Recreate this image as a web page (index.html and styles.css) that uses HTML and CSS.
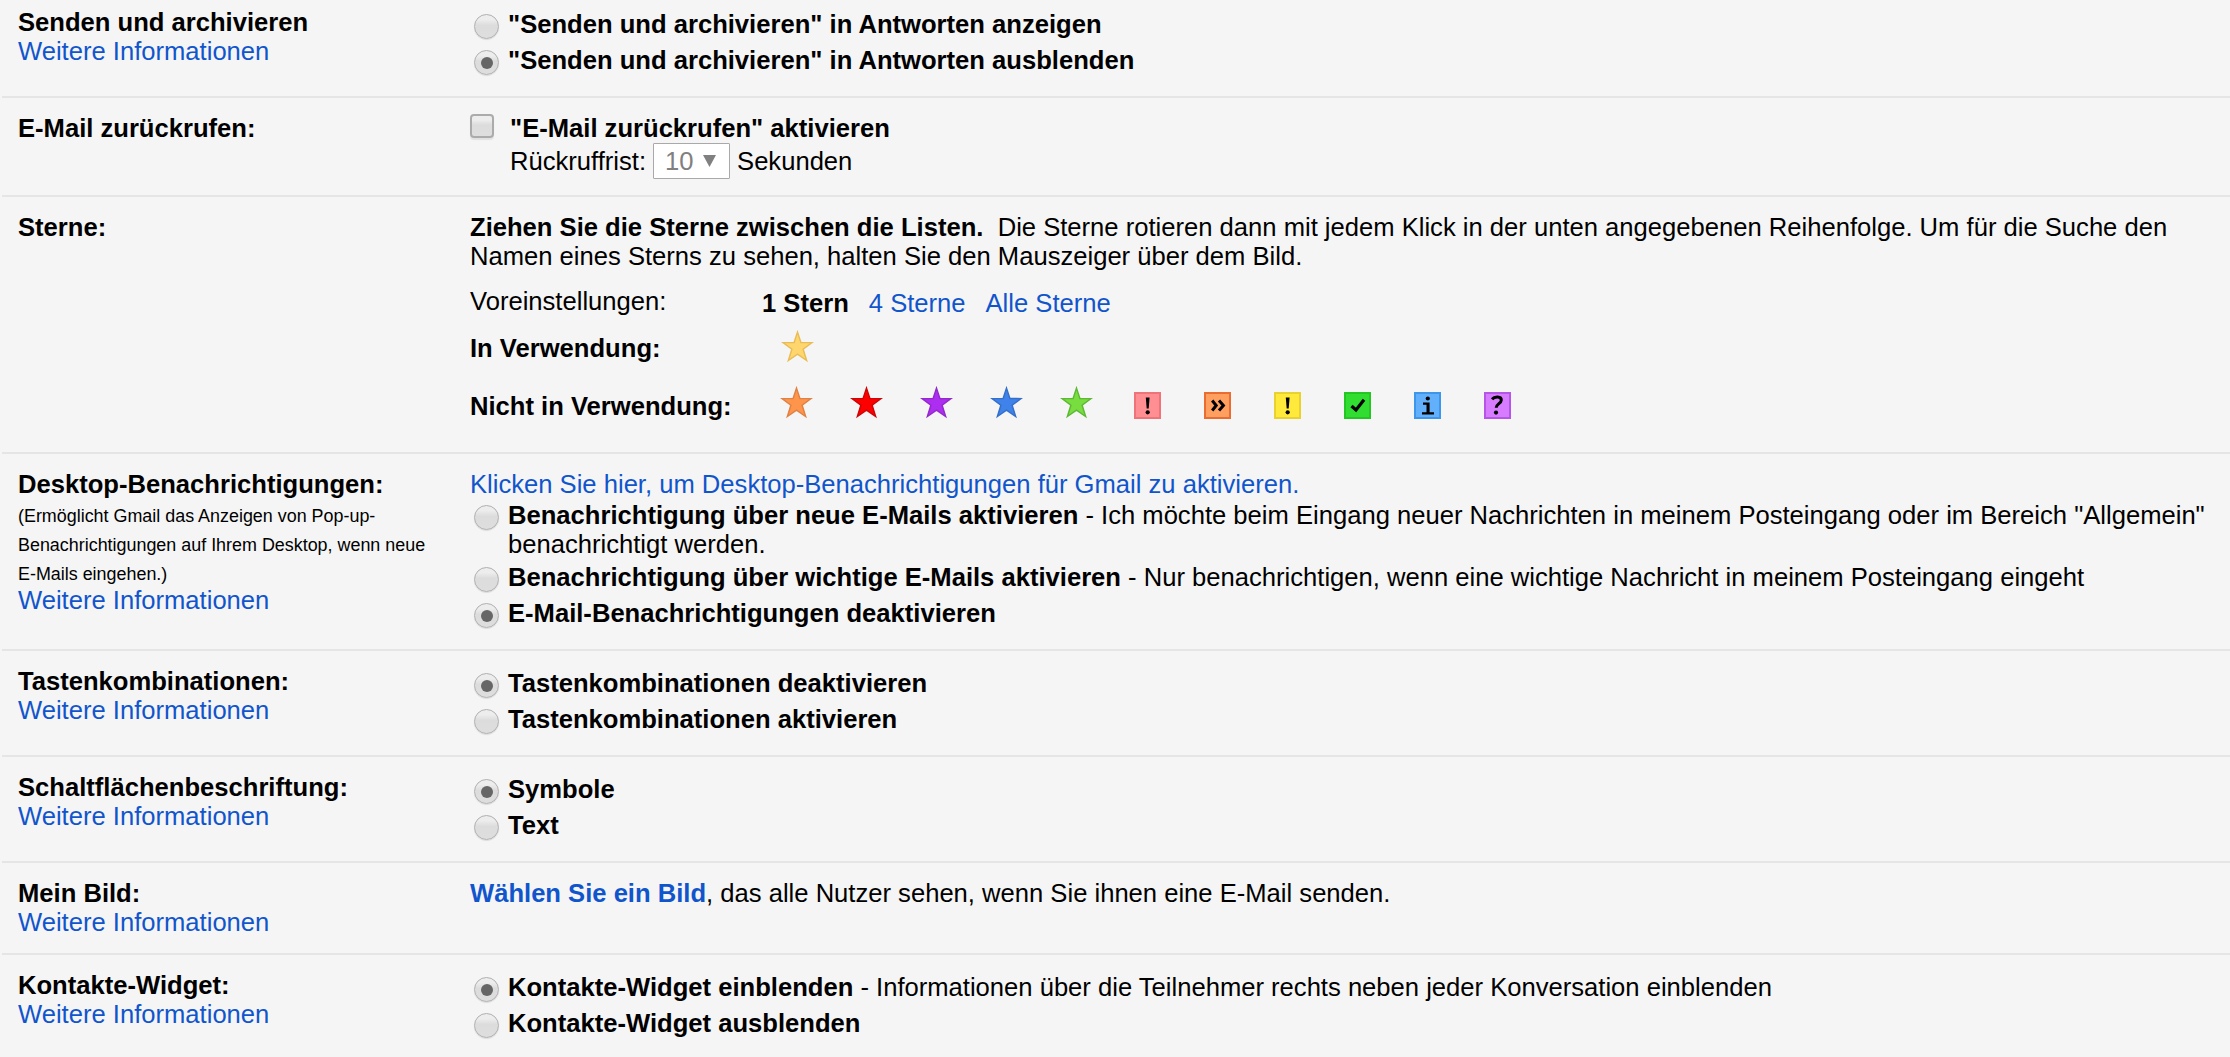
FILE: index.html
```html
<!DOCTYPE html>
<html lang="de">
<head>
<meta charset="utf-8">
<title>Einstellungen</title>
<link rel="stylesheet" href="styles.css">
</head>
<body>
<svg class="defs" width="0" height="0" aria-hidden="true">
  <symbol id="star" viewBox="0 0 34 34">
    <path d="M17 2.200L20.500 12.900L32 13L22.800 19.800L26.400 31.400L17 24.800L7.600 31.400L11.200 19.800L2 13L13.500 12.900Z" stroke-width="1.500" stroke-linejoin="miter"/>
  </symbol>
</svg>
<main class="settings">
  <section class="row">
    <div class="label"><b>Senden und archivieren</b><a>Weitere Informationen</a></div>
    <div class="content">
      <label class="option"><input type="radio" name="archive"><span><b>"Senden und archivieren" in Antworten anzeigen</b></span></label>
      <label class="option"><input type="radio" name="archive" checked><span><b>"Senden und archivieren" in Antworten ausblenden</b></span></label>
    </div>
  </section>

  <section class="row">
    <div class="label"><b>E-Mail zurückrufen:</b></div>
    <div class="content undo">
      <input type="checkbox">
      <div>
        <b class="line">"E-Mail zurückrufen" aktivieren</b>
        <div class="period"><span>Rückruffrist:</span><span class="select">10<svg width="13" height="12" viewBox="0 0 13 12"><path d="M0 0H13L6.500 12Z" fill="#808080"/></svg></span><span>Sekunden</span></div>
      </div>
    </div>
  </section>

  <section class="row stars">
    <div class="label"><b>Sterne:</b></div>
    <div class="content">
      <p><b>Ziehen Sie die Sterne zwischen die Listen.</b>&nbsp; Die Sterne rotieren dann mit jedem Klick in der unten angegebenen Reihenfolge. Um für die Suche den Namen eines Sterns zu sehen, halten Sie den Mauszeiger über dem Bild.</p>
      <div class="star-row presets"><span class="star-label">Voreinstellungen:</span><div class="preset-list"><b>1 Stern</b><a>4 Sterne</a><a>Alle Sterne</a></div></div>
      <div class="star-row used"><b class="star-label">In Verwendung:</b><div class="icons"><svg class="star yellow"><use href="#star"/></svg></div></div>
      <div class="star-row unused"><b class="star-label">Nicht in Verwendung:</b>
        <div class="icons">
          <svg class="star orange"><use href="#star"/></svg>
          <svg class="star red"><use href="#star"/></svg>
          <svg class="star purple"><use href="#star"/></svg>
          <svg class="star blue"><use href="#star"/></svg>
          <svg class="star green"><use href="#star"/></svg>
          <svg class="badge" viewBox="0 0 27 27"><rect x="1" y="1" width="25" height="25" fill="#ff8f92" stroke="#ee7479" stroke-width="2"/><path d="M11.800 5.500H15.600L14.700 16.500H12.700Z"/><circle cx="13.700" cy="20.300" r="2.100"/></svg>
          <svg class="badge" viewBox="0 0 27 27"><rect x="1" y="1" width="25" height="25" fill="#ffa061" stroke="#eb6c30" stroke-width="2"/><path class="stroke" d="M8.200 8.500L12.200 13.500L8.200 18.500M15 8.500L19.400 13.500L15 18.500" stroke-width="3"/></svg>
          <svg class="badge" viewBox="0 0 27 27"><rect x="1" y="1" width="25" height="25" fill="#ffe93b" stroke="#e8d22f" stroke-width="2"/><path d="M11.800 5.500H15.600L14.700 16.500H12.700Z"/><circle cx="13.700" cy="20.300" r="2.100"/></svg>
          <svg class="badge" viewBox="0 0 27 27"><rect x="1" y="1" width="25" height="25" fill="#30dd30" stroke="#23c623" stroke-width="2"/><path class="stroke" d="M7.500 14L12 18L20 7.800" stroke-width="3.200"/></svg>
          <svg class="badge" viewBox="0 0 27 27"><rect x="1" y="1" width="25" height="25" fill="#62b0fb" stroke="#3d96ea" stroke-width="2"/><circle cx="13.800" cy="6.500" r="2.100"/><path d="M9 10.500H15.600V20.200H20V22.600H8V20.200H12.500V12.800H9Z"/></svg>
          <svg class="badge" viewBox="0 0 27 27"><rect x="1" y="1" width="25" height="25" fill="#d77bff" stroke="#b556e8" stroke-width="2"/><path class="stroke" d="M8 7.200C10.500 4.300 17.500 4 17.300 8.300C17.100 11.600 12.300 11.900 12.200 15.800" stroke-width="3"/><circle cx="12" cy="20.600" r="2.100"/></svg>
        </div>
      </div>
    </div>
  </section>

  <section class="row">
    <div class="label"><b>Desktop-Benachrichtigungen:</b><small>(Ermöglicht Gmail das Anzeigen von Pop-up-<br>Benachrichtigungen auf Ihrem Desktop, wenn neue<br>E-Mails eingehen.)</small><a>Weitere Informationen</a></div>
    <div class="content">
      <a class="line">Klicken Sie hier, um Desktop-Benachrichtigungen für Gmail zu aktivieren.</a>
      <label class="option"><input type="radio" name="notify"><span><b>Benachrichtigung über neue E-Mails aktivieren</b> - Ich möchte beim Eingang neuer Nachrichten in meinem Posteingang oder im Bereich "Allgemein" benachrichtigt werden.</span></label>
      <label class="option"><input type="radio" name="notify"><span><b>Benachrichtigung über wichtige E-Mails aktivieren</b> - Nur benachrichtigen, wenn eine wichtige Nachricht in meinem Posteingang eingeht</span></label>
      <label class="option"><input type="radio" name="notify" checked><span><b>E-Mail-Benachrichtigungen deaktivieren</b></span></label>
    </div>
  </section>

  <section class="row">
    <div class="label"><b>Tastenkombinationen:</b><a>Weitere Informationen</a></div>
    <div class="content">
      <label class="option"><input type="radio" name="keys" checked><span><b>Tastenkombinationen deaktivieren</b></span></label>
      <label class="option"><input type="radio" name="keys"><span><b>Tastenkombinationen aktivieren</b></span></label>
    </div>
  </section>

  <section class="row">
    <div class="label"><b>Schaltflächenbeschriftung:</b><a>Weitere Informationen</a></div>
    <div class="content">
      <label class="option"><input type="radio" name="buttons" checked><span><b>Symbole</b></span></label>
      <label class="option"><input type="radio" name="buttons"><span><b>Text</b></span></label>
    </div>
  </section>

  <section class="row">
    <div class="label"><b>Mein Bild:</b><a>Weitere Informationen</a></div>
    <div class="content"><p><a><b>Wählen Sie ein Bild</b></a>, das alle Nutzer sehen, wenn Sie ihnen eine E-Mail senden.</p></div>
  </section>

  <section class="row">
    <div class="label"><b>Kontakte-Widget:</b><a>Weitere Informationen</a></div>
    <div class="content">
      <label class="option"><input type="radio" name="widget" checked><span><b>Kontakte-Widget einblenden</b> - Informationen über die Teilnehmer rechts neben jeder Konversation einblenden</span></label>
      <label class="option"><input type="radio" name="widget"><span><b>Kontakte-Widget ausblenden</b></span></label>
    </div>
  </section>
</main>
</body>
</html>
```

FILE: styles.css
```css
* { box-sizing: border-box; }

body {
  margin: 0;
  height: 1057px;
  overflow: hidden;
  background: #f5f5f5;
  color: #000;
  font: 25.6px/29px "Liberation Sans", Arial, sans-serif;
}

p { margin: 0; }
a { color: #15c; text-decoration: none; }
.defs { display: none; }
.line { display: block; }

.settings { margin: -8px 0 0 2px; }

.row {
  display: flex;
  padding: 16px 16px 16px;
  border-bottom: 2px solid #e5e5e5;
}
.row:last-child { border-bottom: 0; }

.label { flex: 0 0 452px; display: flex; flex-direction: column; }
.label small { padding-top: 3px; margin-bottom: -3px; font-size: 17.92px; line-height: 29px; }
.content { flex: 1; min-width: 0; }

.option { display: flex; min-height: 36px; padding: 2px 0; }

input { appearance: none; flex: none; margin: 0; }

input[type="radio"] {
  width: 25px;
  height: 25px;
  margin: 4px 9px 0 4px;
  border: 1px solid #b0b0b0;
  border-radius: 50%;
  background: linear-gradient(#ededed, #ededed 20%, #dcdcdc 45%, #dedede);
  box-shadow: 0 1px 1px rgba(0, 0, 0, .1);
  display: grid;
  place-items: center;
}
input[type="radio"]:checked::before {
  content: "";
  width: 12px;
  height: 12px;
  border-radius: 50%;
  background: #666;
}

input[type="checkbox"] {
  width: 24px;
  height: 24px;
  margin: 0 16px 0 0;
  border: 2px solid #ababab;
  border-radius: 4px;
  background: linear-gradient(#ededed, #ededed 20%, #dcdcdc 45%, #dedede);
  box-shadow: 0 2px 1px rgba(0, 0, 0, .08);
}

.undo { display: flex; height: 65px; }
.period { display: flex; align-items: center; height: 36px; }
.select {
  display: flex;
  align-items: center;
  justify-content: space-between;
  width: 77px;
  height: 36px;
  margin: 0 7px;
  padding: 0 13px 0 11px;
  border: 1px solid #a9a9a9;
  border-radius: 1px;
  background: #fff;
  color: #808080;
}

.stars .content { height: 223px; }
.star-row { display: flex; }
.star-label { flex: 0 0 292px; }
.presets { margin-top: 16px; height: 47px; }
.preset-list { display: flex; gap: 20px; padding-top: 2px; }
.used { height: 58px; }
.icons { display: flex; }
.star { width: 33px; height: 33px; margin: -6px 19px 0 18px; }
.used .star { margin-top: -4px; margin-left: 19px; }
.badge { width: 27px; height: 27px; margin: 0 21px 0 22px; }
.badge .stroke { fill: none; stroke: #000; }

.yellow { fill: #ffd66e; stroke: #e8bd55; }
.orange { fill: #ff944b; stroke: #df8243; }
.red { fill: #fd0000; stroke: #cd0505; }
.purple { fill: #ad2df0; stroke: #9329cb; }
.blue { fill: #3f82ea; stroke: #346fc9; }
.green { fill: #78dd3f; stroke: #5db834; }
```
